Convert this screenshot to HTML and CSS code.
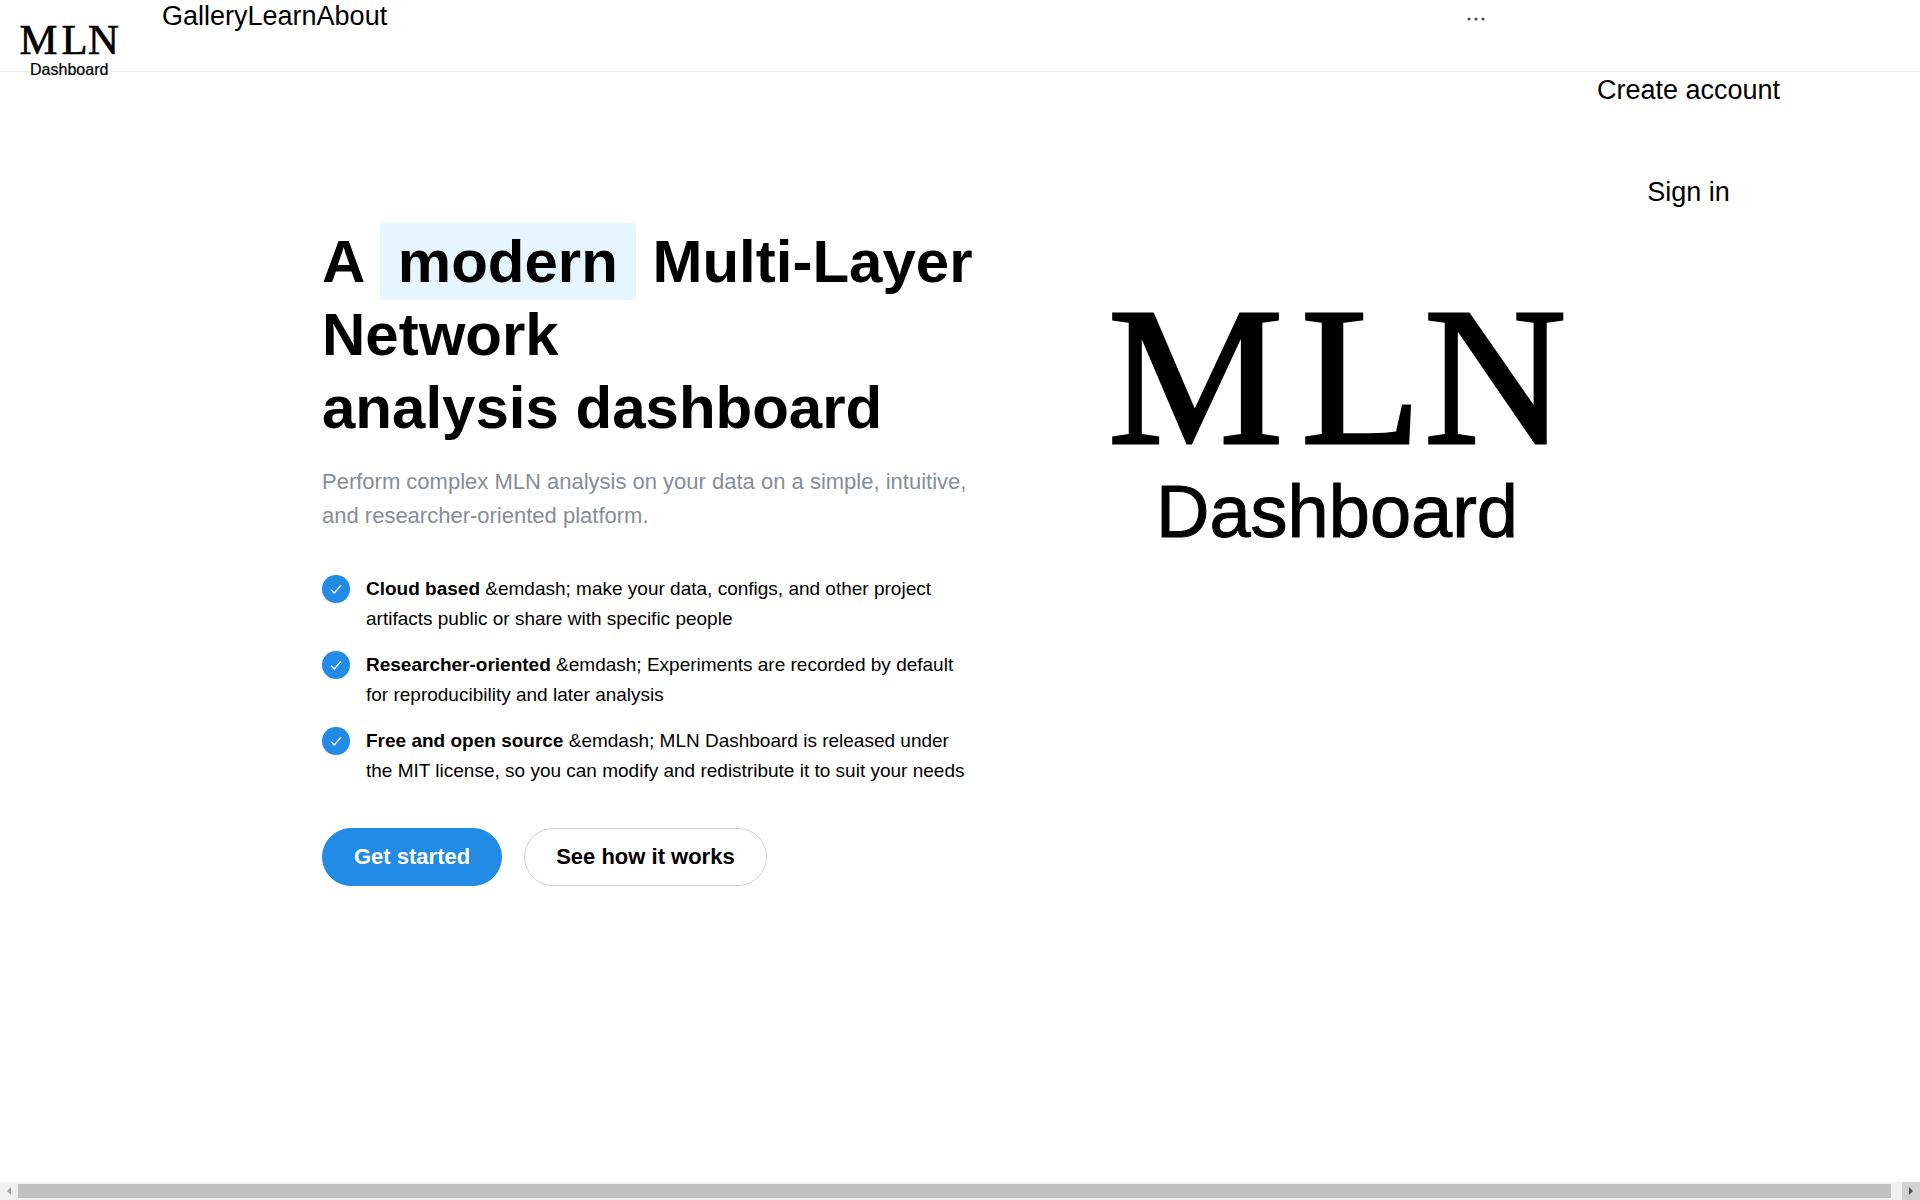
FILE: index.html
```html
<!DOCTYPE html>
<html lang="en">
<head>
<meta charset="utf-8">
<meta name="viewport" content="width=device-width, initial-scale=1">
<title>MLN Dashboard</title>
<link rel="stylesheet" href="styles.css">
</head>
<body>
<header class="header">
  <a class="brand" href="#">
    <svg class="logo" viewBox="0 0 452 230">
      <text class="logo-name" x="-2 191 314" y="131">MLN</text>
      <text class="logo-sub" x="227" y="225">Dashboard</text>
    </svg>
  </a>
  <nav class="nav"><a href="#">Gallery</a><a href="#">Learn</a><a href="#">About</a></nav>
  <button class="more" type="button" aria-label="More">
    <svg viewBox="0 0 24 24" width="24" height="24"><circle cx="5" cy="12" r="1.6"/><circle cx="12" cy="12" r="1.6"/><circle cx="19" cy="12" r="1.6"/></svg>
  </button>
  <div class="account"><a href="#">Create account</a><a href="#">Sign in</a></div>
</header>

<main class="hero">
  <section class="content">
    <h1 class="title">A <span class="highlight">modern</span> Multi-Layer Network<br>analysis dashboard</h1>
    <p class="lead">Perform complex MLN analysis on your data on a simple, intuitive, and researcher-oriented platform.</p>
    <ul class="features">
      <li>
        <span class="check"><svg viewBox="0 0 15 15" width="14" height="14"><path d="M2.2 8.3 5.6 11.8 13 3.4"/></svg></span>
        <span><b>Cloud based</b> &amp;emdash; make your data, configs, and other project artifacts public or share with specific people</span>
      </li>
      <li>
        <span class="check"><svg viewBox="0 0 15 15" width="14" height="14"><path d="M2.2 8.3 5.6 11.8 13 3.4"/></svg></span>
        <span><b>Researcher-oriented</b> &amp;emdash; Experiments are recorded by default for reproducibility and later analysis</span>
      </li>
      <li>
        <span class="check"><svg viewBox="0 0 15 15" width="14" height="14"><path d="M2.2 8.3 5.6 11.8 13 3.4"/></svg></span>
        <span><b>Free and open source</b> &amp;emdash; MLN Dashboard is released under the MIT license, so you can modify and redistribute it to suit your needs</span>
      </li>
    </ul>
    <div class="actions">
      <button class="button primary" type="button">Get started</button>
      <button class="button outline" type="button">See how it works</button>
    </div>
  </section>
  <div class="art">
    <svg class="logo" viewBox="0 0 452 230">
      <text class="logo-name" x="-2 191 314" y="131">MLN</text>
      <text class="logo-sub" x="227" y="225">Dashboard</text>
    </svg>
  </div>
</main>

<div class="scrollbar">
  <span class="arrow"><svg viewBox="0 0 18 18" width="18" height="18"><path fill="#a3a3a3" d="M11 5v8L7 9z"/></svg></span>
  <span class="thumb"></span>
  <span class="arrow pressed"><svg viewBox="0 0 18 18" width="18" height="18"><path fill="#505050" d="M7 5v8l4-4z"/></svg></span>
</div>
</body>
</html>
```

FILE: styles.css
```css
* {
  box-sizing: border-box;
}

body {
  margin: 0;
  min-height: 100vh;
  display: flex;
  flex-direction: column;
  background: #fff;
  color: #000;
  font-family: "Liberation Sans", Arial, sans-serif;
  font-size: 19px;
  line-height: 30px;
}

a {
  color: inherit;
  text-decoration: none;
}

.header {
  height: 72px;
  display: flex;
  align-items: flex-start;
  padding: 0 31px 0 20px;
  border-bottom: 1px solid #e9ecef;
  font-size: 27px;
  line-height: 32px;
}

.brand {
  width: 98px;
  padding-top: 26px;
}

.logo {
  display: block;
  width: 100%;
  overflow: visible;
}

.logo-name {
  font-family: "Liberation Serif", "Times New Roman", serif;
  font-size: 197px;
  stroke: #000;
  stroke-width: 3px;
}

.logo-sub {
  font-size: 74px;
  text-anchor: middle;
  stroke: #000;
  stroke-width: 1px;
}

.nav {
  flex: 1;
  display: flex;
  margin-left: 44px;
}

.more {
  display: flex;
  margin: 7px 0 0;
  padding: 0;
  border: 0;
  background: none;
  fill: #495057;
}

.account {
  width: 401px;
  display: flex;
  flex-direction: column;
  align-items: center;
  gap: 70px;
  padding-top: 74px;
}

.hero {
  flex: 1;
  width: 100%;
  max-width: 1276px;
  margin: 0 auto;
  padding: 153px 0 60px;
  display: flex;
  justify-content: space-between;
  align-items: flex-start;
}

.content {
  width: 654px;
}

.title {
  margin: 0;
  font-size: 60px;
  line-height: 73px;
}

.highlight {
  padding: 5px 18px;
  border-radius: 4px;
  background: #e7f5ff;
}

.lead {
  margin: 21px 0 0;
  color: #868e96;
  font-size: 22px;
  line-height: 34px;
}

.features {
  margin: 41px 0 0;
  padding: 0;
  list-style: none;
  display: grid;
  gap: 16px;
}

.features li {
  display: flex;
  gap: 16px;
}

.check {
  flex: none;
  display: grid;
  place-items: center;
  width: 28px;
  height: 28px;
  margin-top: 1px;
  border-radius: 50%;
  background: #228be6;
}

.check path {
  fill: none;
  stroke: #fff;
  stroke-width: 1.4;
}

.actions {
  display: flex;
  gap: 22px;
  margin-top: 42px;
}

.button {
  height: 58px;
  padding: 0 31px;
  border: 1px solid #228be6;
  border-radius: 29px;
  font: bold 22px/30px "Liberation Sans", Arial, sans-serif;
}

.primary {
  background: #228be6;
  color: #fff;
}

.outline {
  border-color: #ced4da;
  background: #fff;
  color: #000;
}

.art {
  width: 524px;
  padding: 87px 36px 0;
}

.scrollbar {
  display: flex;
  align-items: center;
  height: 18px;
  background: #f0f0f0;
}

.arrow {
  display: flex;
}

.pressed {
  background: #d2d2d2;
}

.thumb {
  flex: 1;
  height: 14px;
  margin-right: 11px;
  background: #c1c1c1;
}
```
